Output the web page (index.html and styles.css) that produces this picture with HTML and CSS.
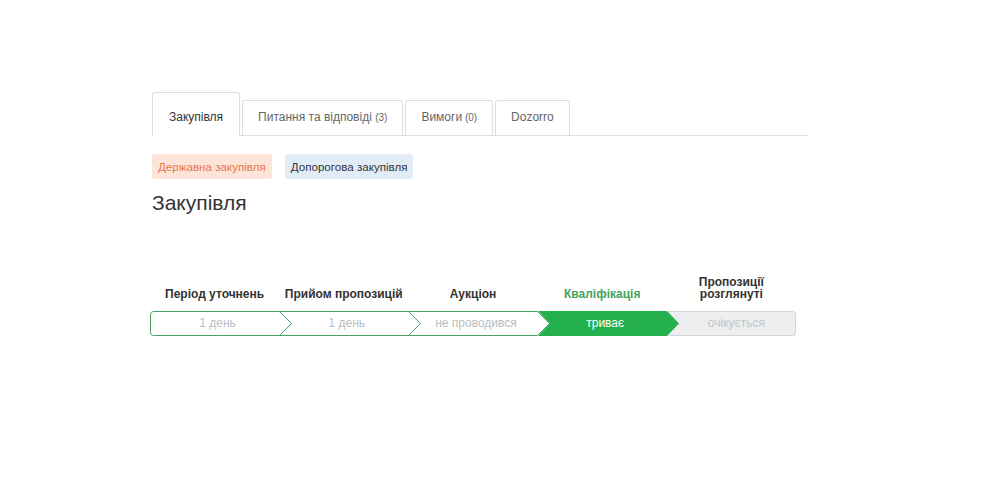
FILE: index.html
```html
<!DOCTYPE html>
<html lang="uk">
<head>
<meta charset="utf-8">
<title>Закупівля</title>
<link rel="stylesheet" href="styles.css">
</head>
<body>
<div class="page">
  <ul class="tabs">
    <li class="tab active">Закупівля</li>
    <li class="tab">Питання та відповіді <span class="count">(3)</span></li>
    <li class="tab">Вимоги<span class="count"> (0)</span></li>
    <li class="tab">Dozorro</li>
  </ul>

  <div class="labels">
    <span class="label label-state">Державна закупівля</span>
    <span class="label label-type">Допорогова закупівля</span>
  </div>

  <h1 class="title">Закупівля</h1>

  <div class="steps">
    <div class="step">
      <div class="step-name">Період уточнень</div>
      <div class="seg">
        <svg class="shape" aria-hidden="true"><path d="M3.5 0.5 H129.5 L141.5 12.5 L129.5 24.5 H3.5 Q0.5 24.5 0.5 21.5 V3.5 Q0.5 0.5 3.5 0.5 Z" fill="#fff" stroke="#4d9f66" stroke-width="1"/></svg>
        <span class="seg-text">1 день</span>
      </div>
    </div>
    <div class="step">
      <div class="step-name">Прийом пропозицій</div>
      <div class="seg">
        <svg class="shape" aria-hidden="true"><path d="M0 0.5 H129.5 L141.5 12.5 L129.5 24.5 H0" fill="none" stroke="#4d9f66" stroke-width="1"/></svg>
        <span class="seg-text">1 день</span>
      </div>
    </div>
    <div class="step">
      <div class="step-name">Аукціон</div>
      <div class="seg">
        <svg class="shape" aria-hidden="true"><path d="M0 0.5 H129.5 L141.5 12.5 L129.5 24.5 H0" fill="none" stroke="#4d9f66" stroke-width="1"/></svg>
        <span class="seg-text">не проводився</span>
      </div>
    </div>
    <div class="step">
      <div class="step-name green">Кваліфікація</div>
      <div class="seg">
        <svg class="shape" aria-hidden="true"><path d="M0 0 H130 L142 12.5 L130 25 H0 L12 12.5 Z" fill="#23b04d"/></svg>
        <span class="seg-text active">триває</span>
      </div>
    </div>
    <div class="step">
      <div class="step-name">Пропозиції<br>розглянуті</div>
      <div class="seg">
        <svg class="shape" aria-hidden="true">
          <path d="M0 0 H126 Q129 0 129 3 V22 Q129 25 126 25 H0 L12 12.5 Z" fill="#eceeef"/>
          <path d="M0 0.5 H125.5 Q128.5 0.5 128.5 3.5 V21.5 Q128.5 24.5 125.5 24.5 H0" fill="none" stroke="#d3d6d8" stroke-width="1"/>
        </svg>
        <span class="seg-text wait">очікується</span>
      </div>
    </div>
  </div>
</div>
</body>
</html>
```

FILE: styles.css
```css
* { box-sizing: border-box; }

html, body {
  margin: 0;
  padding: 0;
  background: #fff;
}

body {
  font-family: "Liberation Sans", Arial, sans-serif;
  color: #333;
}

.page {
  width: 656px;
  margin-left: 152px;
  padding-top: 92px;
}

.tabs {
  list-style: none;
  margin: 0;
  padding: 0;
  display: flex;
  align-items: flex-end;
  height: 44px;
  border-bottom: 1px solid #ddd;
}

.tab {
  height: 35px;
  line-height: 33px;
  padding: 0 15px;
  margin-right: 2px;
  border: 1px solid #ddd;
  border-bottom: none;
  border-radius: 3px 3px 0 0;
  font-size: 12px;
  color: #666;
  white-space: nowrap;
}

.tab.active {
  height: 44px;
  padding: 8px 16px 0;
  margin-bottom: -1px;
  background: #fff;
  color: #333;
}

.count {
  font-size: 10px;
  color: #666;
}

.labels {
  display: flex;
  gap: 13px;
  margin-top: 18px;
}

.label {
  display: block;
  height: 25px;
  line-height: 25px;
  padding: 0 6px;
  font-size: 11.6px;
  border-radius: 3px;
}

.label-state {
  background: #fde4d9;
  color: #e8784a;
}

.label-type {
  background: #e1ecf7;
  color: #33363b;
}

.title {
  margin: 12px 0 0;
  font-size: 21px;
  line-height: 24px;
  font-weight: normal;
  color: #333;
}

.steps {
  display: grid;
  grid-template-columns: repeat(5, 1fr);
  width: 646px;
  margin-left: -2px;
  margin-top: 61px;
}

.step {
  display: flex;
  flex-direction: column;
}

.step-name {
  height: 24px;
  display: flex;
  align-items: flex-end;
  justify-content: center;
  text-align: center;
  font-size: 12px;
  line-height: 12px;
  font-weight: bold;
  color: #333;
  white-space: nowrap;
}

.step-name.green {
  color: #45a35a;
}

.seg {
  position: relative;
  height: 25px;
  margin-top: 11px;
  display: flex;
  align-items: center;
  justify-content: center;
  padding-left: 6px;
  padding-bottom: 2px;
}

.shape {
  position: absolute;
  left: 0;
  top: 0;
  width: 100%;
  height: 100%;
  overflow: visible;
}

.seg-text {
  position: relative;
  font-size: 12px;
  color: #b9bec2;
}

.seg-text.active {
  color: #fff;
}

.seg-text.wait {
  color: #c2c6c9;
  padding-left: 4px;
}
```
